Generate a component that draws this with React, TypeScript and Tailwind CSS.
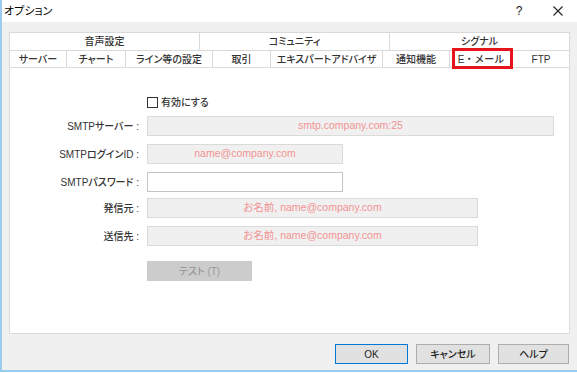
import React from "react";

const font = "[font-family:'Liberation_Sans','Noto_Sans_CJK_JP',sans-serif] [font-feature-settings:'palt']";

const topTabs = [
  { label: "音声設定", w: "w-[190px]" },
  { label: "コミュニティ", w: "w-[190px]" },
  { label: "シグナル", w: "w-[181px]" },
];

const tabs = [
  { label: "サーバー", w: "w-[57px]" },
  { label: "チャート", w: "w-[59px]" },
  { label: "ライン等の設定", w: "w-[87px]" },
  { label: "取引", w: "w-[58px]" },
  { label: "エキスパートアドバイザ", w: "w-[112px]" },
  { label: "通知機能", w: "w-[67px]" },
  { label: "E・メール", w: "w-[63px]", active: true },
  { label: "FTP", w: "w-[58px]" },
];

const Row = ({ label, children, className = "" }: { label?: string; children: React.ReactNode; className?: string }) => (
  <div className={`flex items-center ${className}`}>
    <div className="w-[129px] text-right text-[10px] font-medium text-[#333]">{label}</div>
    <div className="ml-[8px] flex">{children}</div>
  </div>
);

const Field = ({ value, w, white }: { value?: string; w: string; white?: boolean }) => (
  <div
    className={`${w} h-[20px] flex items-center justify-center border text-[10.5px] text-[#f29393] ${
      white ? "bg-white border-[#c4c4c4]" : "bg-[#f0f0f0] border-[#dadada]"
    }`}
  >
    {value}
  </div>
);

export default function App() {
  return (
    <div className={`w-[577px] h-[373px] bg-white ${font}`}>
      <div className="h-[372px] flex flex-col bg-[#f0f0f0] border-l-2 border-b-2 border-[#9ccbf0]">
        {/* title bar */}
        <div className="h-[22px] bg-white flex items-center pl-[2px] pr-[14px]">
          <span className="text-[11px] text-black">オプション</span>
          <span className="flex-1" />
          <span className="text-[12px] font-medium text-[#222] w-[8px] text-center">?</span>
          <svg className="ml-[30px]" width="10" height="10" viewBox="0 0 10 10">
            <path d="M0.5 0.5 L9.5 9.5 M9.5 0.5 L0.5 9.5" stroke="#222" strokeWidth="1.1" />
          </svg>
        </div>

        <div className="flex-1 flex flex-col pl-[7px] pr-[7px] pt-[10px]">
          {/* tabs */}
          <div className="flex h-[18px]">
            {topTabs.map((t, i) => (
              <div
                key={t.label}
                className={`${t.w} flex items-center justify-center bg-white border-t border-l border-[#d9d9d9] ${
                  i === topTabs.length - 1 ? "border-r" : ""
                } text-[10px] font-medium text-[#333]`}
              >
                {t.label}
              </div>
            ))}
          </div>
          <div className="flex h-[17px]">
            {tabs.map((t, i) => (
              <div
                key={t.label}
                className={`relative ${t.w} flex items-center justify-center bg-white border-t border-l border-[#d9d9d9] ${
                  i === tabs.length - 1 ? "border-r" : ""
                } text-[10px] font-medium text-[#333] ${t.active ? "[font-feature-settings:normal]" : ""}`}
              >
                {t.label}
                {t.active && (
                  <span className="absolute left-[2px] -right-[1px] -top-[3px] -bottom-[2px] border-[3px] border-[#e8141b] z-10" />
                )}
              </div>
            ))}
          </div>

          {/* panel */}
          <div className="h-[267px] bg-white border border-[#dcdcdc] flex flex-col pt-[28px]">
            <Row className="h-[12px]">
              <div className="flex items-center">
                <span className="w-[11px] h-[11px] border border-[#333] bg-white" />
                <span className="ml-[3px] text-[10px] font-medium text-[#333]">有効にする</span>
              </div>
            </Row>
            <Row label="SMTPサーバー :" className="mt-[8px]">
              <Field value="smtp.company.com:25" w="w-[407px]" />
            </Row>
            <Row label="SMTPログインID :" className="mt-[8px]">
              <Field value="name@company.com" w="w-[196px]" />
            </Row>
            <Row label="SMTPパスワード :" className="mt-[8px]">
              <Field w="w-[196px]" white />
            </Row>
            <Row label="発信元 :" className="mt-[6px]">
              <Field value="お名前, name@company.com" w="w-[331px]" />
            </Row>
            <Row label="送信先 :" className="mt-[8px]">
              <Field value="お名前, name@company.com" w="w-[331px]" />
            </Row>
            <Row className="mt-[15px]">
              <div className="w-[105px] h-[20px] flex items-center justify-center bg-[#cccccc] text-[10px] font-medium text-[#9a9a9a]">
                テスト (T)
              </div>
            </Row>
          </div>

          {/* buttons */}
          <div className="mt-[10px] flex justify-end gap-[8px] pr-[1px]">
            <div className="w-[73px] h-[20px] flex items-center justify-center bg-[#e1e1e1] border border-[#0078d7] text-[10px] font-medium text-[#222]">
              OK
            </div>
            <div className="w-[74px] h-[20px] flex items-center justify-center bg-[#e1e1e1] border border-[#adadad] text-[10px] font-medium text-[#222]">
              キャンセル
            </div>
            <div className="w-[71px] h-[20px] flex items-center justify-center bg-[#e1e1e1] border border-[#adadad] text-[10px] font-medium text-[#222]">
              ヘルプ
            </div>
          </div>
        </div>
      </div>
    </div>
  );
}
